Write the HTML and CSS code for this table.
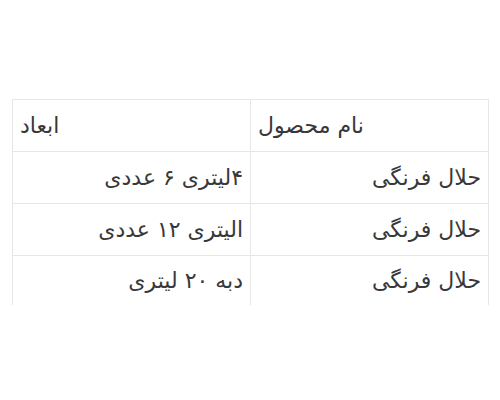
FILE: index.html
```html
<!DOCTYPE html>
<html lang="fa" dir="rtl">
<head>
<meta charset="utf-8">
<link rel="stylesheet" href="styles.css">
</head>
<body>
<div class="wrap">
<table class="products">
<thead>
<tr><th class="col-name">نام محصول</th><th class="col-dim">ابعاد</th></tr>
</thead>
<tbody>
<tr><td>حلال فرنگی</td><td>۴لیتری ۶ عددی</td></tr>
<tr><td>حلال فرنگی</td><td>الیتری ۱۲ عددی</td></tr>
<tr class="last"><td>حلال فرنگی</td><td>دبه ۲۰ لیتری</td></tr>
</tbody>
</table>
</div>
</body>
</html>
```
FILE: styles.css
```css
html, body { margin: 0; padding: 0; background: #fff; }
body { width: 500px; height: 400px; overflow: hidden; }
.wrap { padding-top: 99px; padding-left: 12px; direction: ltr; }
.products {
  direction: rtl;
  border-collapse: collapse;
  width: 477px;
  font-family: "DejaVu Sans", sans-serif;
  font-size: 22px;
  color: #383838;
}
.products th, .products td {
  border: 1px solid #e6e6e6;
  height: 52px;
  padding: 0 7px;
  font-weight: normal;
  vertical-align: middle;
  box-sizing: border-box;
}
.products th { text-align: left; }
.products td { text-align: right; }
.products .last td { border-bottom-color: transparent; height: 49px; }
.col-name { width: 238px; }
```
